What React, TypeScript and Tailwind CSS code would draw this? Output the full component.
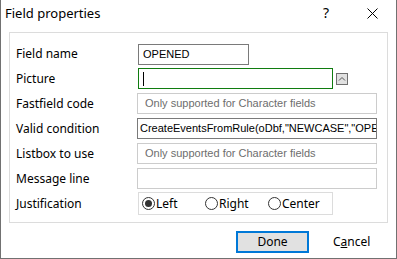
import { useState } from 'react';

const FONT = { fontFamily: '"Noto Sans", "Open Sans", sans-serif' };
const EDIT_FONT = { fontFamily: '"Liberation Sans", Arial, sans-serif' };

const rows: { label: string; kind: 'name' | 'picture' | 'disabled' | 'text' | 'empty' | 'radio'; value?: string }[] = [
  { label: 'Field name', kind: 'name', value: 'OPENED' },
  { label: 'Picture', kind: 'picture' },
  { label: 'Fastfield code', kind: 'disabled', value: 'Only supported for Character fields' },
  { label: 'Valid condition', kind: 'text', value: 'CreateEventsFromRule(oDbf,"NEWCASE","OPENED",nil)' },
  { label: 'Listbox to use', kind: 'disabled', value: 'Only supported for Character fields' },
  { label: 'Message line', kind: 'empty' },
  { label: 'Justification', kind: 'radio' },
];

const Radio = ({ label, checked, onClick }: { label: string; checked: boolean; onClick: () => void }) => (
  <button type="button" onClick={onClick} className="flex items-center gap-[1px] text-[12px] text-black">
    <span className="w-[13px] h-[13px] rounded-full border border-[#333] bg-white flex items-center justify-center">
      {checked && <span className="w-[7px] h-[7px] rounded-full bg-[#333]" />}
    </span>
    <span>{label}</span>
  </button>
);

export default function App() {
  const [just, setJust] = useState('Left');

  return (
    <div className="w-[397px] h-[259px] bg-white border-x border-b border-[#717171] flex flex-col" style={FONT}>
      {/* Title bar */}
      <div className="h-[31px] flex items-center pl-[4px] pb-[5px] shrink-0">
        <span className="text-[13px] text-black leading-none">Field properties</span>
        <span className="flex-1" />
        <span className="w-[46px] text-center text-[14px] text-black leading-none">?</span>
        <span className="w-[46px] flex justify-center mr-[1px]">
          <svg width="11" height="11" viewBox="0 0 11 11" stroke="#000" strokeWidth="1">
            <path d="M0.5 0.5 L10.5 10.5 M10.5 0.5 L0.5 10.5" />
          </svg>
        </span>
      </div>

      {/* Group box */}
      <div className="mx-[8px] mt-[1px] h-[191px] border border-[#dcdcdc] pt-[9px] pl-[6px] pr-[10px] flex flex-col">
        {rows.map((r, i) => (
          <div key={r.label} className={`flex items-center ${i === 0 ? 'h-[24px]' : 'h-[25px]'}`}>
            <span className="w-[122px] text-[12px] text-black">{r.label}</span>
            <div className="flex-1 flex items-center">
              {r.kind === 'name' && (
                <div className="w-[111px] h-[21px] border border-[#7a7a7a] px-[4px] text-[11px] text-black flex items-center" style={EDIT_FONT}>
                  {r.value}
                </div>
              )}
              {r.kind === 'picture' && (
                <>
                  <div className="w-[195px] h-[21px] border border-[#107c10] flex items-center pl-[4px]">
                    <span className="w-[1px] h-[14px] bg-black" />
                  </div>
                  <div className="ml-[3px] w-[12px] h-[12px] border border-[#707070] bg-[#e1e1e1] flex items-center justify-center">
                    <svg width="8" height="6" viewBox="0 0 8 6" fill="none" stroke="#555" strokeWidth="1">
                      <path d="M1 4.5 L4 1.5 L7 4.5" />
                    </svg>
                  </div>
                </>
              )}
              {r.kind === 'disabled' && (
                <div className="w-[240px] h-[21px] border border-[#cccccc] px-[7px] text-[11px] text-[#6d6d6d] flex items-center" style={EDIT_FONT}>
                  {r.value}
                </div>
              )}
              {r.kind === 'text' && (
                <div className="w-[240px] h-[21px] border border-[#7a7a7a] px-[2px] text-[11px] text-black flex items-center overflow-hidden whitespace-nowrap" style={EDIT_FONT}>
                  {r.value}
                </div>
              )}
              {r.kind === 'empty' && <div className="w-[240px] h-[21px] border border-[#cccccc]" />}
              {r.kind === 'radio' && (
                <div className="w-[195px] h-[23px] border border-[#dcdcdc] flex items-center pl-[3px]">
                  <div className="w-[63px]"><Radio label="Left" checked={just === 'Left'} onClick={() => setJust('Left')} /></div>
                  <div className="w-[63px]"><Radio label="Right" checked={just === 'Right'} onClick={() => setJust('Right')} /></div>
                  <div><Radio label="Center" checked={just === 'Center'} onClick={() => setJust('Center')} /></div>
                </div>
              )}
            </div>
          </div>
        ))}
      </div>

      {/* Footer */}
      <div className="flex items-center pl-[235px] pt-[8px] gap-[24px]">
        <button type="button" className="w-[73px] h-[22px] bg-[#e1e1e1] border-2 border-[#0078d7] text-[12px] text-black">
          Done
        </button>
        <span className="text-[12px] text-black">
          C<span className="underline">a</span>ncel
        </span>
      </div>
    </div>
  );
}
